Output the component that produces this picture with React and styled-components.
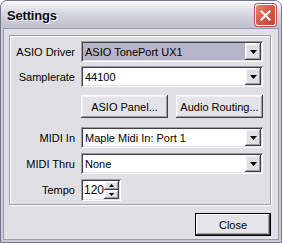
import React from 'react';
import styled, { createGlobalStyle } from 'styled-components';

const GlobalStyle = createGlobalStyle`
	html, body {
		margin: 0;
		padding: 0;
		background: #ffffff;
	}
	body {
		font-family: 'Liberation Sans', Arial, sans-serif;
		font-size: 11px;
		color: #000;
	}
`;

const raised = `
	box-shadow: inset -1px -1px 0 #404048, inset 1px 1px 0 #ffffff,
		inset -2px -2px 0 #9d9da1, inset 2px 2px 0 #f2f2f4;
`;

const sunken = `
	box-shadow: inset 1px 1px 0 #9d9da1, inset -1px -1px 0 #ffffff,
		inset 2px 2px 0 #404048, inset -2px -2px 0 #e0dfe3;
`;

const Window = styled.div`
	width: 282px;
	height: 243px;
	box-sizing: border-box;
	border: 1px solid #76768e;
	border-radius: 7px 7px 0 0;
	background: #c9c9d8;
	display: flex;
	flex-direction: column;
	overflow: hidden;
`;

const TitleBar = styled.div`
	height: 27px;
	flex-shrink: 0;
	display: flex;
	align-items: center;
	justify-content: space-between;
	padding: 0 5px 0 6px;
	background: linear-gradient(#fbfbfd 0%, #e4e4ec 25%, #cfcfdc 60%, #bfbfd0 100%);
`;

const Title = styled.span`
	font-family: 'Liberation Sans', Arial, sans-serif;
	font-weight: bold;
	font-size: 13px;
	letter-spacing: -0.2px;
	color: #0a0a14;
	text-shadow: 1px 1px 0 #ffffff;
	margin-top: 1px;
`;

const CloseBox = styled.div`
	width: 19px;
	height: 20px;
	border-radius: 3px;
	border: 1px solid #ffffff;
	box-shadow: 0 0 0 1px #b0505a;
	background: linear-gradient(135deg, #e88a74 0%, #d75d4c 45%, #c0423a 100%);
	display: flex;
	align-items: center;
	justify-content: center;
	margin-top: 1px;
`;

const Client = styled.div`
	flex: 1;
	margin: 0 2px 2px;
	border: 1px solid #9a9ab2;
	background: #e0dfe3;
	display: flex;
	flex-direction: column;
	align-items: flex-start;
	padding: 6px 0 0 5px;
`;

const GroupBox = styled.div`
	width: 262px;
	height: 170px;
	box-sizing: border-box;
	border: 1px solid #9d9da1;
	box-shadow: inset 1px 1px 0 #ffffff, 1px 1px 0 #ffffff;
	display: flex;
	flex-direction: column;
	padding-top: 5px;
`;

const Row = styled.div`
	display: flex;
	align-items: center;
	margin-top: ${({ $top }) => $top || 0}px;
`;

const Label = styled.div`
	width: 65px;
	margin-right: 6px;
	text-align: right;
	white-space: nowrap;
`;

const Combo = styled.div`
	width: 182px;
	height: 21px;
	box-sizing: border-box;
	padding: 2px;
	display: flex;
	align-items: stretch;
	background: ${({ $selected }) => ($selected ? '#b5b5c7' : '#ffffff')};
	${sunken}
`;

const ComboText = styled.div`
	flex: 1;
	padding-left: 2px;
	display: flex;
	align-items: center;
	white-space: nowrap;
	overflow: hidden;
`;

const DropButton = styled.div`
	width: 16px;
	background: #e0dfe3;
	display: flex;
	align-items: center;
	justify-content: center;
	${raised}
`;

const ButtonRow = styled.div`
	display: flex;
	gap: 8px;
	margin-left: 71px;
	margin-top: 8px;
`;

const PushButton = styled.div`
	width: ${({ $width }) => $width || 87}px;
	height: 23px;
	box-sizing: border-box;
	display: flex;
	align-items: center;
	justify-content: center;
	background: #e4e4e8;
	white-space: nowrap;
	${raised}
	${({ $default }) =>
		$default &&
		`box-shadow: inset 0 0 0 1px #000, inset -2px -2px 0 #404048, inset 2px 2px 0 #ffffff,
			inset -3px -3px 0 #9d9da1;`}
`;

const SpinBox = styled.div`
	width: 40px;
	height: 22px;
	box-sizing: border-box;
	padding: 2px;
	display: flex;
	background: #ffffff;
	${sunken}
`;

const SpinField = styled.div`
	flex: 1;
	padding-left: 1px;
	display: flex;
	align-items: center;
	font-size: 12px;
`;

const SpinArrows = styled.div`
	width: 15px;
	display: flex;
	flex-direction: column;
`;

const SpinArrow = styled.div`
	flex: 1;
	background: #e0dfe3;
	display: flex;
	align-items: center;
	justify-content: center;
	${raised}
`;

const Footer = styled.div`
	align-self: flex-end;
	margin: 8px 7px 0 0;
`;

const Triangle = ({ down = true, w = 7 }) => (
	<svg width={w} height={Math.ceil(w / 2)} viewBox={`0 0 ${w} ${Math.ceil(w / 2)}`}>
		<polygon
			points={down ? `0,0 ${w},0 ${w / 2},${Math.ceil(w / 2)}` : `0,${Math.ceil(w / 2)} ${w},${Math.ceil(w / 2)} ${w / 2},0`}
			fill="#000"
		/>
	</svg>
);

const ComboField = ({ value, selected }) => (
	<Combo $selected={selected}>
		<ComboText>{value}</ComboText>
		<DropButton>
			<Triangle />
		</DropButton>
	</Combo>
);

const App = () => (
	<>
		<GlobalStyle />
		<Window>
			<TitleBar>
				<Title>Settings</Title>
				<CloseBox>
					<svg width="11" height="11" viewBox="0 0 11 11">
						<path d="M1.5 1.5 L9.5 9.5 M9.5 1.5 L1.5 9.5" stroke="#fff" strokeWidth="2" strokeLinecap="square" />
					</svg>
				</CloseBox>
			</TitleBar>
			<Client>
				<GroupBox>
					<Row>
						<Label>ASIO Driver</Label>
						<ComboField value="ASIO TonePort UX1" selected />
					</Row>
					<Row $top={4}>
						<Label>Samplerate</Label>
						<ComboField value="44100" />
					</Row>
					<ButtonRow>
						<PushButton>ASIO Panel...</PushButton>
						<PushButton>Audio Routing...</PushButton>
					</ButtonRow>
					<Row $top={9}>
						<Label>MIDI In</Label>
						<ComboField value="Maple Midi In: Port 1" />
					</Row>
					<Row $top={5}>
						<Label>MIDI Thru</Label>
						<ComboField value="None" />
					</Row>
					<Row $top={5}>
						<Label>Tempo</Label>
						<SpinBox>
							<SpinField>120</SpinField>
							<SpinArrows>
								<SpinArrow>
									<Triangle down={false} w={5} />
								</SpinArrow>
								<SpinArrow>
									<Triangle w={5} />
								</SpinArrow>
							</SpinArrows>
						</SpinBox>
					</Row>
				</GroupBox>
				<Footer>
					<PushButton $width={76} $default>
						Close
					</PushButton>
				</Footer>
			</Client>
		</Window>
	</>
);

export default App;
